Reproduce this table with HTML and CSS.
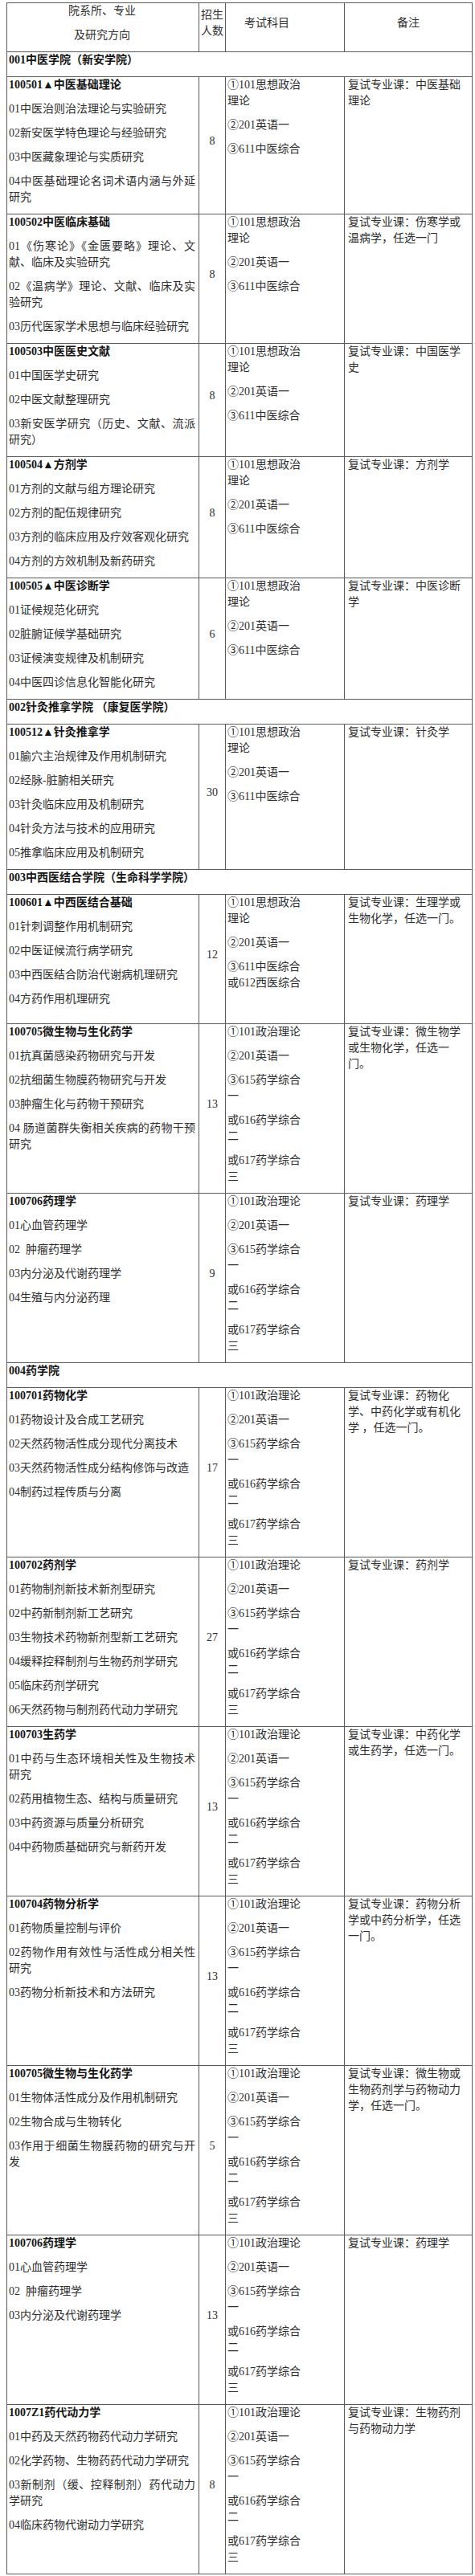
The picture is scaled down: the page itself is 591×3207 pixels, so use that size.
FILE: index.html
```html
<!DOCTYPE html>
<html lang="zh-CN">
<head>
<meta charset="utf-8">
<title>招生专业目录</title>
<link rel="stylesheet" href="styles.css">
</head>
<body>
<table class="plan">
<colgroup><col class="c-major"><col class="c-num"><col class="c-exam"><col class="c-note"></colgroup>
<thead>
<tr class="head">
<th class="major"><p>院系所、专业</p><p>及研究方向</p></th>
<th class="num"><p>招生人数</p></th>
<th class="exam"><p>考试科目</p></th>
<th class="note"><p>备注</p></th>
</tr>
</thead>
<tbody>
<tr class="sec"><td colspan="4"><p>001中医学院（新安学院）</p></td></tr>

<tr>
<td class="major"><p class="title">100501▲中医基础理论</p><p>01中医治则治法理论与实验研究</p><p>02新安医学特色理论与经验研究</p><p>03中医藏象理论与实质研究</p><p>04中医基础理论名词术语内涵与外延研究</p></td>
<td class="num"><p>8</p></td>
<td class="exam"><p>①101思想政治理论</p><p>②201英语一</p><p>③611中医综合</p></td>
<td class="note"><p>复试专业课：中医基础理论</p></td>
</tr>

<tr>
<td class="major"><p class="title">100502中医临床基础</p><p>01《伤寒论》《金匮要略》理论、文献、临床及实验研究</p><p>02《温病学》理论、文献、临床及实验研究</p><p>03历代医家学术思想与临床经验研究</p></td>
<td class="num"><p>8</p></td>
<td class="exam"><p>①101思想政治理论</p><p>②201英语一</p><p>③611中医综合</p></td>
<td class="note"><p>复试专业课：伤寒学或温病学，任选一门</p></td>
</tr>

<tr>
<td class="major"><p class="title">100503中医医史文献</p><p>01中国医学史研究</p><p>02中医文献整理研究</p><p>03新安医学研究（历史、文献、流派研究）</p></td>
<td class="num"><p>8</p></td>
<td class="exam"><p>①101思想政治理论</p><p>②201英语一</p><p>③611中医综合</p></td>
<td class="note"><p>复试专业课：中国医学史</p></td>
</tr>

<tr>
<td class="major"><p class="title">100504▲方剂学</p><p>01方剂的文献与组方理论研究</p><p>02方剂的配伍规律研究</p><p>03方剂的临床应用及疗效客观化研究</p><p>04方剂的方效机制及新药研究</p></td>
<td class="num"><p>8</p></td>
<td class="exam"><p>①101思想政治理论</p><p>②201英语一</p><p>③611中医综合</p></td>
<td class="note"><p>复试专业课：方剂学</p></td>
</tr>

<tr>
<td class="major"><p class="title">100505▲中医诊断学</p><p>01证候规范化研究</p><p>02脏腑证候学基础研究</p><p>03证候演变规律及机制研究</p><p>04中医四诊信息化智能化研究</p></td>
<td class="num"><p>6</p></td>
<td class="exam"><p>①101思想政治理论</p><p>②201英语一</p><p>③611中医综合</p></td>
<td class="note"><p>复试专业课：中医诊断学</p></td>
</tr>

<tr class="sec"><td colspan="4"><p>002针灸推拿学院 （康复医学院）</p></td></tr>

<tr>
<td class="major"><p class="title">100512▲针灸推拿学</p><p>01腧穴主治规律及作用机制研究</p><p>02经脉-脏腑相关研究</p><p>03针灸临床应用及机制研究</p><p>04针灸方法与技术的应用研究</p><p>05推拿临床应用及机制研究</p></td>
<td class="num"><p>30</p></td>
<td class="exam"><p>①101思想政治理论</p><p>②201英语一</p><p>③611中医综合</p></td>
<td class="note"><p>复试专业课：针灸学</p></td>
</tr>

<tr class="sec"><td colspan="4"><p>003中西医结合学院（生命科学学院）</p></td></tr>

<tr>
<td class="major spaced"><p class="title">100601▲中西医结合基础</p><p>01针刺调整作用机制研究</p><p>02中医证候流行病学研究</p><p>03中西医结合防治代谢病机理研究</p><p>04方药作用机理研究</p></td>
<td class="num"><p>12</p></td>
<td class="exam"><p>①101思想政治理论</p><p>②201英语一</p><p>③611中医综合或612西医综合</p></td>
<td class="note"><p>复试专业课：生理学或生物化学，任选一门。</p></td>
</tr>

<tr>
<td class="major"><p class="title">100705微生物与生化药学</p><p>01抗真菌感染药物研究与开发</p><p>02抗细菌生物膜药物研究与开发</p><p>03肿瘤生化与药物干预研究</p><p>04 肠道菌群失衡相关疾病的药物干预研究</p></td>
<td class="num"><p>13</p></td>
<td class="exam"><p>①101政治理论</p><p>②201英语一</p><p>③615药学综合一</p><p>或616药学综合二</p><p>或617药学综合三</p></td>
<td class="note"><p>复试专业课：微生物学或生物化学，任选一门。</p></td>
</tr>

<tr>
<td class="major"><p class="title">100706药理学</p><p>01心血管药理学</p><p>02&nbsp; 肿瘤药理学</p><p>03内分泌及代谢药理学</p><p>04生殖与内分泌药理</p></td>
<td class="num"><p>9</p></td>
<td class="exam"><p>①101政治理论</p><p>②201英语一</p><p>③615药学综合一</p><p>或616药学综合二</p><p>或617药学综合三</p></td>
<td class="note"><p>复试专业课：药理学</p></td>
</tr>

<tr class="sec"><td colspan="4"><p>004药学院</p></td></tr>

<tr>
<td class="major"><p class="title">100701药物化学</p><p>01药物设计及合成工艺研究</p><p>02天然药物活性成分现代分离技术</p><p>03天然药物活性成分结构修饰与改造</p><p>04制药过程传质与分离</p></td>
<td class="num"><p>17</p></td>
<td class="exam"><p>①101政治理论</p><p>②201英语一</p><p>③615药学综合一</p><p>或616药学综合二</p><p>或617药学综合三</p></td>
<td class="note"><p>复试专业课：药物化学、中药化学或有机化学 ，任选一门。</p></td>
</tr>

<tr>
<td class="major"><p class="title">100702药剂学</p><p>01药物制剂新技术新剂型研究</p><p>02中药新制剂新工艺研究</p><p>03生物技术药物新剂型新工艺研究</p><p>04缓释控释制剂与生物药剂学研究</p><p>05临床药剂学研究</p><p>06天然药物与制剂药代动力学研究</p></td>
<td class="num"><p>27</p></td>
<td class="exam"><p>①101政治理论</p><p>②201英语一</p><p>③615药学综合一</p><p>或616药学综合二</p><p>或617药学综合三</p></td>
<td class="note"><p>复试专业课：药剂学</p></td>
</tr>

<tr>
<td class="major"><p class="title">100703生药学</p><p>01中药与生态环境相关性及生物技术研究</p><p>02药用植物生态、结构与质量研究</p><p>03中药资源与质量分析研究</p><p>04中药物质基础研究与新药开发</p></td>
<td class="num"><p>13</p></td>
<td class="exam"><p>①101政治理论</p><p>②201英语一</p><p>③615药学综合一</p><p>或616药学综合二</p><p>或617药学综合三</p></td>
<td class="note"><p>复试专业课：中药化学或生药学，任选一门。</p></td>
</tr>

<tr>
<td class="major"><p class="title">100704药物分析学</p><p>01药物质量控制与评价</p><p>02药物作用有效性与活性成分相关性研究</p><p>03药物分析新技术和方法研究</p></td>
<td class="num"><p>13</p></td>
<td class="exam"><p>①101政治理论</p><p>②201英语一</p><p>③615药学综合一</p><p>或616药学综合二</p><p>或617药学综合三</p></td>
<td class="note"><p>复试专业课：药物分析学或中药分析学，任选一门。</p></td>
</tr>

<tr>
<td class="major"><p class="title">100705微生物与生化药学</p><p>01生物体活性成分及作用机制研究</p><p>02生物合成与生物转化</p><p>03作用于细菌生物膜药物的研究与开发</p></td>
<td class="num"><p>5</p></td>
<td class="exam"><p>①101政治理论</p><p>②201英语一</p><p>③615药学综合一</p><p>或616药学综合二</p><p>或617药学综合三</p></td>
<td class="note"><p>复试专业课：微生物或生物药剂学与药物动力学，任选一门。</p></td>
</tr>

<tr>
<td class="major"><p class="title">100706药理学</p><p>01心血管药理学</p><p>02&nbsp; 肿瘤药理学</p><p>03内分泌及代谢药理学</p></td>
<td class="num"><p>13</p></td>
<td class="exam"><p>①101政治理论</p><p>②201英语一</p><p>③615药学综合一</p><p>或616药学综合二</p><p>或617药学综合三</p></td>
<td class="note"><p>复试专业课：药理学</p></td>
</tr>

<tr>
<td class="major"><p class="title">1007Z1药代动力学</p><p>01中药及天然药物药代动力学研究</p><p>02化学药物、生物药药代动力学研究</p><p>03新制剂（缓、控释制剂）药代动力学研究</p><p>04临床药物代谢动力学研究</p></td>
<td class="num"><p>8</p></td>
<td class="exam"><p>①101政治理论</p><p>②201英语一</p><p>③615药学综合一</p><p>或616药学综合二</p><p>或617药学综合三</p></td>
<td class="note"><p>复试专业课：生物药剂与药物动力学</p></td>
</tr>
</tbody>
</table>
</body>
</html>
```

FILE: styles.css
```css
* {
  box-sizing: border-box;
}

body {
  margin: 0;
  padding: 3px 0 0 8px;
  background: #ffffff;
  font-family: "Liberation Serif", "Noto Sans CJK SC", serif;
  font-size: 14px;
  color: #2e2e2e;
}

.plan {
  border-collapse: separate;
  border-spacing: 0;
  table-layout: fixed;
  width: 580px;
  border-left: 1px solid #5a5a5a;
  border-top: 1px solid #5a5a5a;
}

.c-major { width: 239px; }
.c-num { width: 33px; }
.c-exam { width: 148px; }
.c-note { width: 159px; }

.plan th,
.plan td {
  border-right: 1px solid #5a5a5a;
  border-bottom: 1px solid #5a5a5a;
  padding: 0 4px 0 2px;
  vertical-align: top;
  text-align: left;
  font-weight: normal;
}

.plan p {
  margin: 0 0 10px;
  line-height: 20px;
}

.plan .major p {
  text-align: justify;
}

.plan .num {
  padding: 0 1px;
  text-align: center;
  vertical-align: middle;
}

.plan .exam {
  padding-left: 2px;
}

.plan .exam p {
  max-width: 98px;
}

.plan .note {
  padding-left: 4px;
}

.plan .head th {
  vertical-align: middle;
  text-align: center;
}

.plan .head .major p {
  text-align: center;
}

.plan .title,
.plan .sec p {
  font-weight: bold;
  color: #151515;
}

.plan .spaced {
  padding-bottom: 10px;
}
```
